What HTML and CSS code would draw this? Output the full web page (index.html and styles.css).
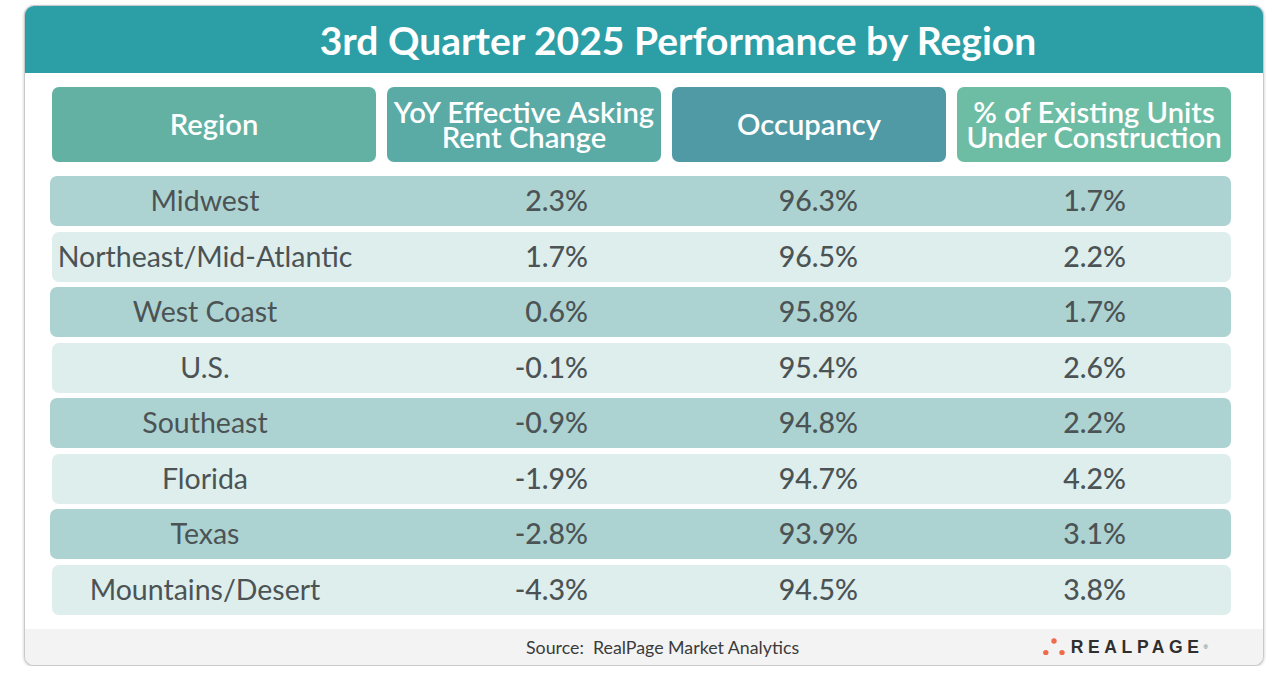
FILE: index.html
```html
<!DOCTYPE html>
<html lang="en">
<head>
<meta charset="utf-8">
<title>3rd Quarter 2025 Performance by Region</title>
<link rel="stylesheet" href="styles.css">
</head>
<body>
<div class="card">
  <header class="card-title">
    <h1>3rd Quarter 2025 Performance by Region</h1>
  </header>
  <div class="table">
    <div class="head">
      <div class="hcell h1">Region</div>
      <div class="hcell h2"><span class="ln">YoY Effective Asking</span><span class="ln">Rent Change</span></div>
      <div class="hcell h3">Occupancy</div>
      <div class="hcell h4"><span class="ln">% of Existing Units</span><span class="ln">Under Construction</span></div>
    </div>
    <div class="rows">
      <div class="row dark"><span class="region">Midwest</span><span class="val">2.3%</span><span class="val">96.3%</span><span class="val">1.7%</span></div>
      <div class="row light"><span class="region">Northeast/Mid-Atlantic</span><span class="val">1.7%</span><span class="val">96.5%</span><span class="val">2.2%</span></div>
      <div class="row dark"><span class="region">West Coast</span><span class="val">0.6%</span><span class="val">95.8%</span><span class="val">1.7%</span></div>
      <div class="row light"><span class="region">U.S.</span><span class="val">-0.1%</span><span class="val">95.4%</span><span class="val">2.6%</span></div>
      <div class="row dark"><span class="region">Southeast</span><span class="val">-0.9%</span><span class="val">94.8%</span><span class="val">2.2%</span></div>
      <div class="row light"><span class="region">Florida</span><span class="val">-1.9%</span><span class="val">94.7%</span><span class="val">4.2%</span></div>
      <div class="row dark"><span class="region">Texas</span><span class="val">-2.8%</span><span class="val">93.9%</span><span class="val">3.1%</span></div>
      <div class="row light"><span class="region">Mountains/Desert</span><span class="val">-4.3%</span><span class="val">94.5%</span><span class="val">3.8%</span></div>
    </div>
  </div>
  <footer class="card-foot">
    <span class="source">Source:&nbsp; RealPage Market Analytics</span>
    <span class="logo">
      <svg class="dots" width="24" height="18" viewBox="0 0 24 18" aria-hidden="true">
        <circle cx="11" cy="4" r="2.7" fill="#f06b4c"/>
        <circle cx="2.8" cy="15.6" r="2.7" fill="#f06b4c"/>
        <circle cx="19" cy="15.6" r="2.7" fill="#f06b4c"/>
      </svg>
      <span class="wordmark">REALPAGE</span><span class="reg">®</span>
    </span>
  </footer>
</div>
</body>
</html>
```

FILE: styles.css
```css
* { box-sizing: border-box; }
html, body { margin: 0; padding: 0; background: #ffffff; }
body {
  font-family: Lato, "Open Sans", "Liberation Sans", sans-serif;
  padding: 5px 0 0 24px;
}
.card {
  width: 1240px;
  height: 661px;
  border: 1px solid #c9c9c9;
  border-radius: 10px;
  overflow: hidden;
  box-shadow: 0 1px 3px rgba(0,0,0,0.25);
  display: flex;
  flex-direction: column;
  background: #ffffff;
}
.card-title {
  height: 67px;
  background: #2c9ea5;
  display: flex;
  align-items: center;
  justify-content: center;
  padding-left: 68px;
}
.card-title h1 {
  margin: 0;
  color: #ffffff;
  font-size: 39px;
  font-weight: 700;
  letter-spacing: 0;
}
.table {
  padding: 14px 32px 0 27px;
  flex: 1;
}
.head {
  display: grid;
  grid-template-columns: 324px 274px 274px 274px;
  column-gap: 11px;
  height: 75px;
}
.hcell {
  border-radius: 7px;
  color: #ffffff;
  font-size: 29.2px;
  font-weight: 600;
  line-height: 26px;
  display: flex;
  flex-direction: column;
  align-items: center;
  justify-content: center;
  text-align: center;
  padding-bottom: 2px;
  white-space: nowrap;
}
.ln { display: block; height: 25px; line-height: 25px; }
.h1 { background: #63b1a3; }
.h2 { background: #5aaaa6; }
.h3 { background: #4f9aa5; }
.h4 { background: #6dbda5; }
.rows {
  margin-top: 14px;
  display: flex;
  flex-direction: column;
  gap: 5.5px;
}
.row {
  height: 50px;
  border-radius: 7px;
  display: grid;
  grid-template-columns: 306px 230px 270px 268px;
  align-items: center;
  color: #4c5355;
  font-size: 28.5px;
  padding-bottom: 2px;
}
.row.dark { background: #acd3d2; margin-left: -2px; padding-left: 2px; }
.row.light { background: #ddeeed; }
.region { text-align: center; font-weight: 400; }
.val { text-align: right; font-weight: 500; }
.card-foot {
  height: 36px;
  background: #f3f3f3;
  display: flex;
  align-items: center;
  padding-right: 55px;
}
.source {
  margin-left: 501px;
  font-size: 17.8px;
  color: #3b3b3b;
}
.logo {
  margin-left: auto;
  display: flex;
  align-items: center;
}
.dots { display: block; margin-right: 4px; margin-top: -2px; }
.wordmark {
  font-family: "Liberation Sans", Arial, sans-serif;
  font-weight: 700;
  font-size: 17.5px;
  letter-spacing: 4.6px;
  color: #2f2f2f;
}
.reg {
  font-family: "Liberation Sans", Arial, sans-serif;
  font-size: 6px;
  line-height: 6px;
  color: #555;
  align-self: flex-start;
  margin-top: 7px;
}
```
